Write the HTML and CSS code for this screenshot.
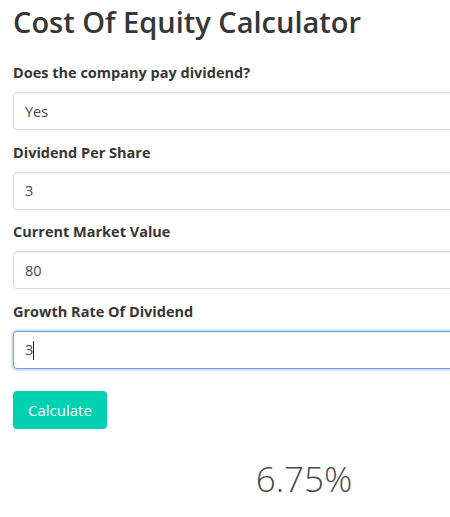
FILE: index.html
```html
<!DOCTYPE html>
<html lang="en">
<head>
<meta charset="utf-8">
<title>Cost Of Equity Calculator</title>
<link rel="stylesheet" href="styles.css">
</head>
<body>
<main class="calc">
  <h1 class="title">Cost Of Equity Calculator</h1>
  <div class="field">
    <label class="label" for="pays">Does the company pay dividend?</label>
    <select class="input" id="pays"><option>Yes</option><option>No</option></select>
  </div>
  <div class="field">
    <label class="label" for="dps">Dividend Per Share</label>
    <input class="input" id="dps" type="text" value="3">
  </div>
  <div class="field">
    <label class="label" for="cmv">Current Market Value</label>
    <input class="input" id="cmv" type="text" value="80">
  </div>
  <div class="field">
    <label class="label" for="grd">Growth Rate Of Dividend</label>
    <div class="control">
      <input class="input is-focused" id="grd" type="text" value="3">
      <span class="caret"></span>
    </div>
  </div>
  <button class="button" type="button">Calculate</button>
  <p class="result">6.75%</p>
</main>
</body>
</html>
```

FILE: styles.css
```css
html {
  overflow: hidden;
}
body {
  margin: 0;
  padding: 0 13px;
  font-family: "Open Sans", "Noto Sans", sans-serif;
  color: #4a4a4a;
  background: #fff;
}
.calc {
  width: 582px;
}
.title {
  margin: 0;
  padding-top: 2px;
  font-size: 29px;
  line-height: 40px;
  font-weight: 600;
  color: #363636;
  margin-bottom: 20px;
}
.field {
  margin-bottom: 11.5px;
}
.label {
  display: block;
  font-size: 14.5px;
  font-weight: 700;
  line-height: 22px;
  color: #363636;
  margin-bottom: 8px;
}
.control {
  position: relative;
}
.input {
  display: block;
  box-sizing: border-box;
  width: 100%;
  height: 38px;
  padding: 0 11px;
  font-family: inherit;
  font-size: 14.5px;
  color: #4a4a4a;
  background: #fff;
  border: 1px solid #dbdbdb;
  border-radius: 4px;
  box-shadow: inset 0 1px 2px rgba(10, 10, 10, 0.06);
  outline: none;
  appearance: none;
  -webkit-appearance: none;
}
.input.is-focused {
  border-color: #6d9be6;
  box-shadow: 0 0 0 2px rgba(50, 115, 220, 0.2);
}
.caret {
  position: absolute;
  left: 20px;
  top: 10px;
  width: 1px;
  height: 19px;
  background: #222;
}
.button {
  margin-top: 11px;
  height: 38px;
  padding: 0 15px;
  font-family: inherit;
  font-size: 15px;
  color: #fff;
  background: #00d1b2;
  border: none;
  border-radius: 4px;
}
.result {
  margin: 26px 0 0;
  text-align: center;
  font-size: 35px;
  font-weight: 300;
  line-height: 48px;
  color: #4a4a4a;
}
```
